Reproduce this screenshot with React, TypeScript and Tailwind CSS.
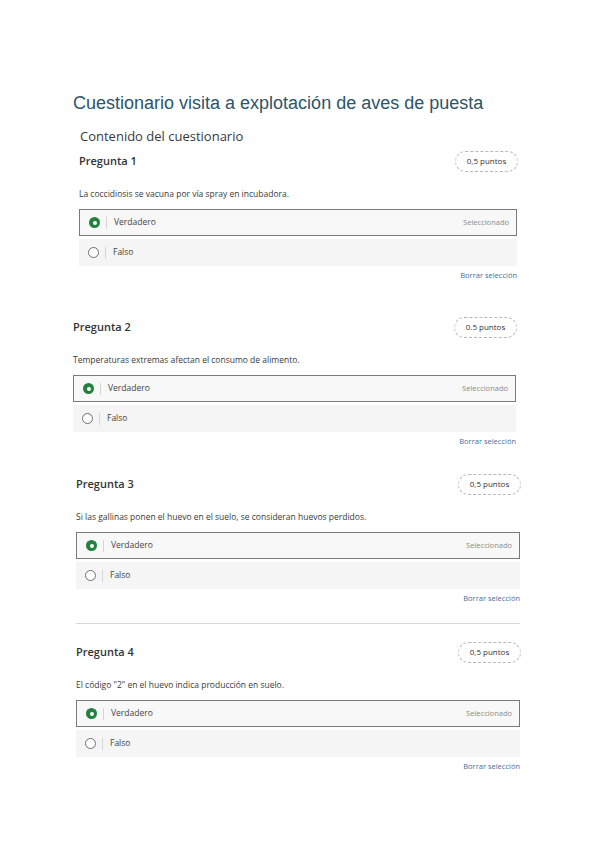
import React from 'react';

interface Question {
  n: number;
  text: string;
  points: string;
  box: string;
}

const questions: Question[] = [
  { n: 1, text: 'La coccidiosis se vacuna por vía spray en incubadora.', points: '0,5 puntos', box: 'ml-[6px] w-[438px]' },
  { n: 2, text: 'Temperaturas extremas afectan el consumo de alimento.', points: '0.5 puntos', box: 'ml-0 w-[443px]' },
  { n: 3, text: 'Si las gallinas ponen el huevo en el suelo, se consideran huevos perdidos.', points: '0,5 puntos', box: 'ml-[3px] w-[444px]' },
  { n: 4, text: 'El código "2" en el huevo indica producción en suelo.', points: '0,5 puntos', box: 'ml-[3px] w-[444px]' },
];

const Radio: React.FC<{ checked: boolean }> = ({ checked }) =>
  checked ? (
    <span className="w-[11px] h-[11px] rounded-full bg-[#23803f] flex items-center justify-center">
      <span className="w-[4px] h-[4px] rounded-full bg-white" />
    </span>
  ) : (
    <span className="w-[11px] h-[11px] rounded-full border border-[#6d6d6d] bg-white" />
  );

const Option: React.FC<{ label: string; selected: boolean }> = ({ label, selected }) => (
  <div
    className={
      selected
        ? 'h-[27px] flex items-center border-[1.5px] border-[#7a7a7a] bg-[#f8f8f8] pl-[9px] pr-[7px]'
        : 'h-[27px] flex items-center bg-[#f5f5f5] pl-[9px] pr-[7px]'
    }
  >
    <Radio checked={selected} />
    <span className="ml-[6px] w-px h-[12px] bg-[#d4d4d4]" />
    <span className="ml-[7px] text-[8.5px] text-[#444]">{label}</span>
    {selected && <span className="ml-auto text-[7.5px] text-[#8a8a8a]">Seleccionado</span>}
  </div>
);

const QuestionBlock: React.FC<{ q: Question }> = ({ q }) => (
  <div className={q.box}>
    <div className="flex items-center justify-between h-[22px]">
      <span className="text-[11px] font-semibold text-[#333]">Pregunta {q.n}</span>
      <span className="w-[63px] h-[21px] rounded-full border border-dashed border-[#b8b8b8] flex items-center justify-center text-[8px] text-[#333] mr-[-1px]">
        {q.points}
      </span>
    </div>
    <p className="mt-[16px] text-[8.5px] leading-[12px] text-[#3a3a3a]">{q.text}</p>
    <div className="mt-[9px] flex flex-col gap-[3px]">
      <Option label="Verdadero" selected />
      <Option label="Falso" selected={false} />
    </div>
    <div className="mt-[3px] text-right text-[7.5px] leading-[12px] text-[#3f6f9a]">Borrar selección</div>
  </div>
);

export default function App() {
  return (
    <div className="w-[599px] h-[848px] bg-white font-['Open_Sans',sans-serif] overflow-hidden">
      <div className="pl-[73px] pt-[90px]">
        <h1 className="font-['Liberation_Sans',Arial,sans-serif] text-[18px] leading-[26px] text-[#2c5568]">
          Cuestionario visita a explotación de aves de puesta
        </h1>
        <div className="ml-[7px] mt-[12px] text-[13px] leading-[16px] text-[#3a3a3a]">Contenido del cuestionario</div>
        <div className="mt-[6px]">
          <QuestionBlock q={questions[0]} />
        </div>
        <div className="mt-[35px]">
          <QuestionBlock q={questions[1]} />
        </div>
        <div className="mt-[26px]">
          <QuestionBlock q={questions[2]} />
        </div>
        <div className="ml-[3px] w-[444px] mt-[19px] h-px bg-[#d8d8d8]" />
        <div className="mt-[17px]">
          <QuestionBlock q={questions[3]} />
        </div>
      </div>
    </div>
  );
}
